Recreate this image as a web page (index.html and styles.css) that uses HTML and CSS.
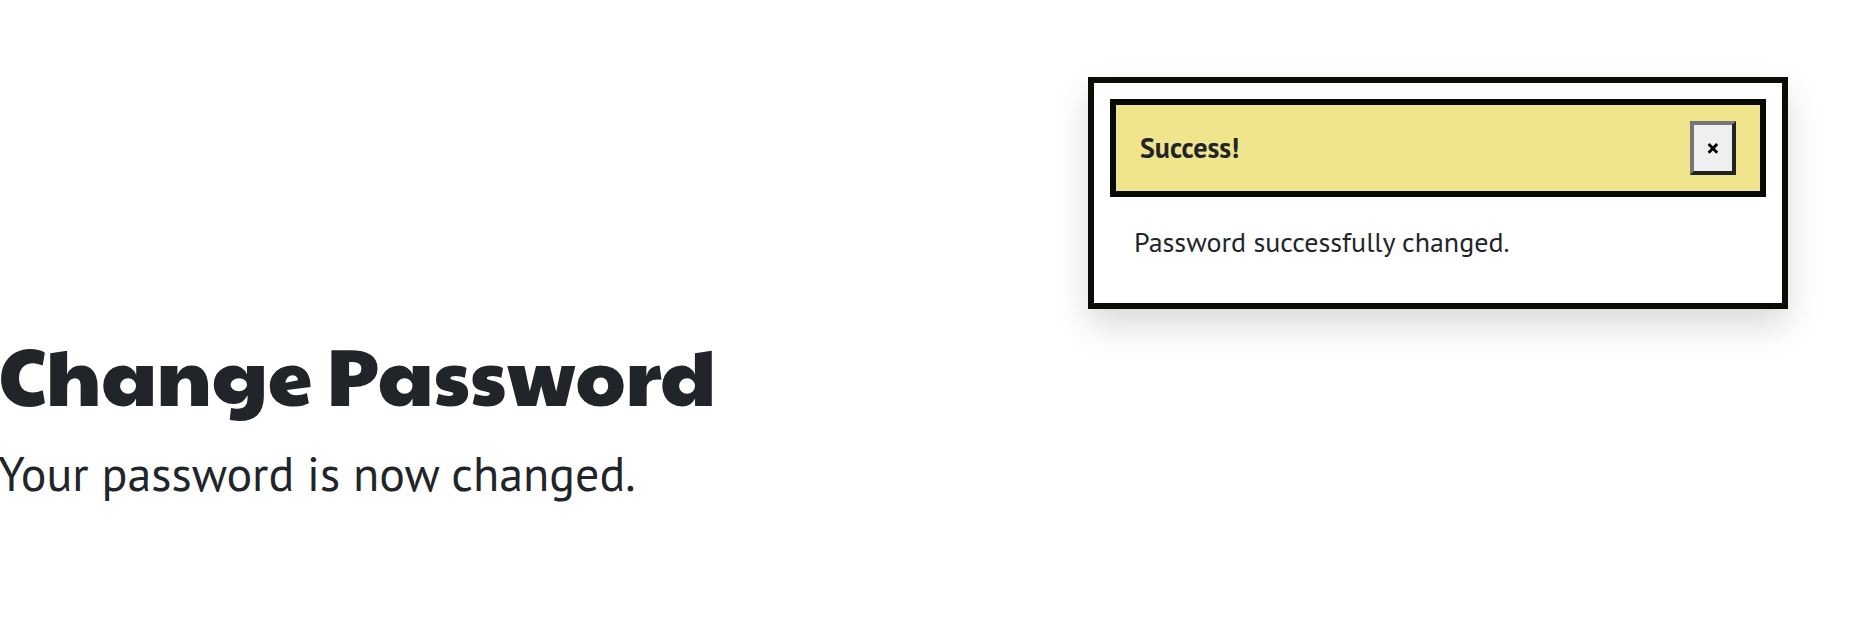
FILE: index.html
```html
<!DOCTYPE html>
<html lang="en">
<head>
<meta charset="utf-8">
<title>Change Password</title>
<link rel="stylesheet" href="styles.css">
</head>
<body>
<section class="toast" role="status">
  <header class="toast-header">
    <strong class="toast-title">Success!</strong>
    <button class="toast-close" type="button" aria-label="Close"><svg width="12" height="12" viewBox="0 0 12 12" aria-hidden="true"><path d="M1.6 2.1L10.2 10.7M10.2 2.1L1.6 10.7"/></svg></button>
  </header>
  <p class="toast-body"><span class="toast-message">Password successfully changed.</span></p>
</section>
<main class="content">
  <h1 class="heading">Change Password</h1>
  <p class="lead">Your password is now changed.</p>
</main>
</body>
</html>
```
FILE: styles.css
```css
* { box-sizing: border-box; }
body {
  margin: 0;
  padding-top: 77px;
  background: #fff;
  color: #212529;
  font-family: "PT Sans", "Open Sans", "Noto Sans", sans-serif;
  font-stretch: 87.5%;
}
.toast {
  width: 700px;
  height: 232px;
  margin-left: 1088px;
  padding: 16px;
  border: 6px solid #0a0c06;
  background: #fff;
  box-shadow: 0 16px 32px rgba(0, 0, 0, .15);
}
.toast-header {
  display: flex;
  align-items: center;
  justify-content: space-between;
  height: 98px;
  padding: 0 24px;
  border: 6px solid #060b06;
  background: #f0e48c;
}
.toast-title {
  font-size: 28px;
  font-weight: 700;
  line-height: 42px;
}
.toast-close {
  display: flex;
  align-items: center;
  justify-content: center;
  width: 46px;
  height: 54px;
  padding: 0;
  border: 4px solid;
  border-color: #767676 #212121 #212121 #767676;
  background: #efefef;
}
.toast-close path {
  fill: none;
  stroke: #000;
  stroke-width: 2.8;
}
.toast-body {
  margin: 0;
  padding: 24px;
  font-size: 28px;
  line-height: 42px;
}
.heading {
  margin: 16px 0 0;
  font-family: "Paytone One", Inter, sans-serif;
  font-size: 80px;
  font-weight: 500;
  line-height: 96px;
  text-indent: -1px;
  white-space: nowrap;
}
.lead {
  margin: 16px 0 0;
  font-size: 48px;
  line-height: 72px;
  text-indent: -2px;
  white-space: nowrap;
}
```
